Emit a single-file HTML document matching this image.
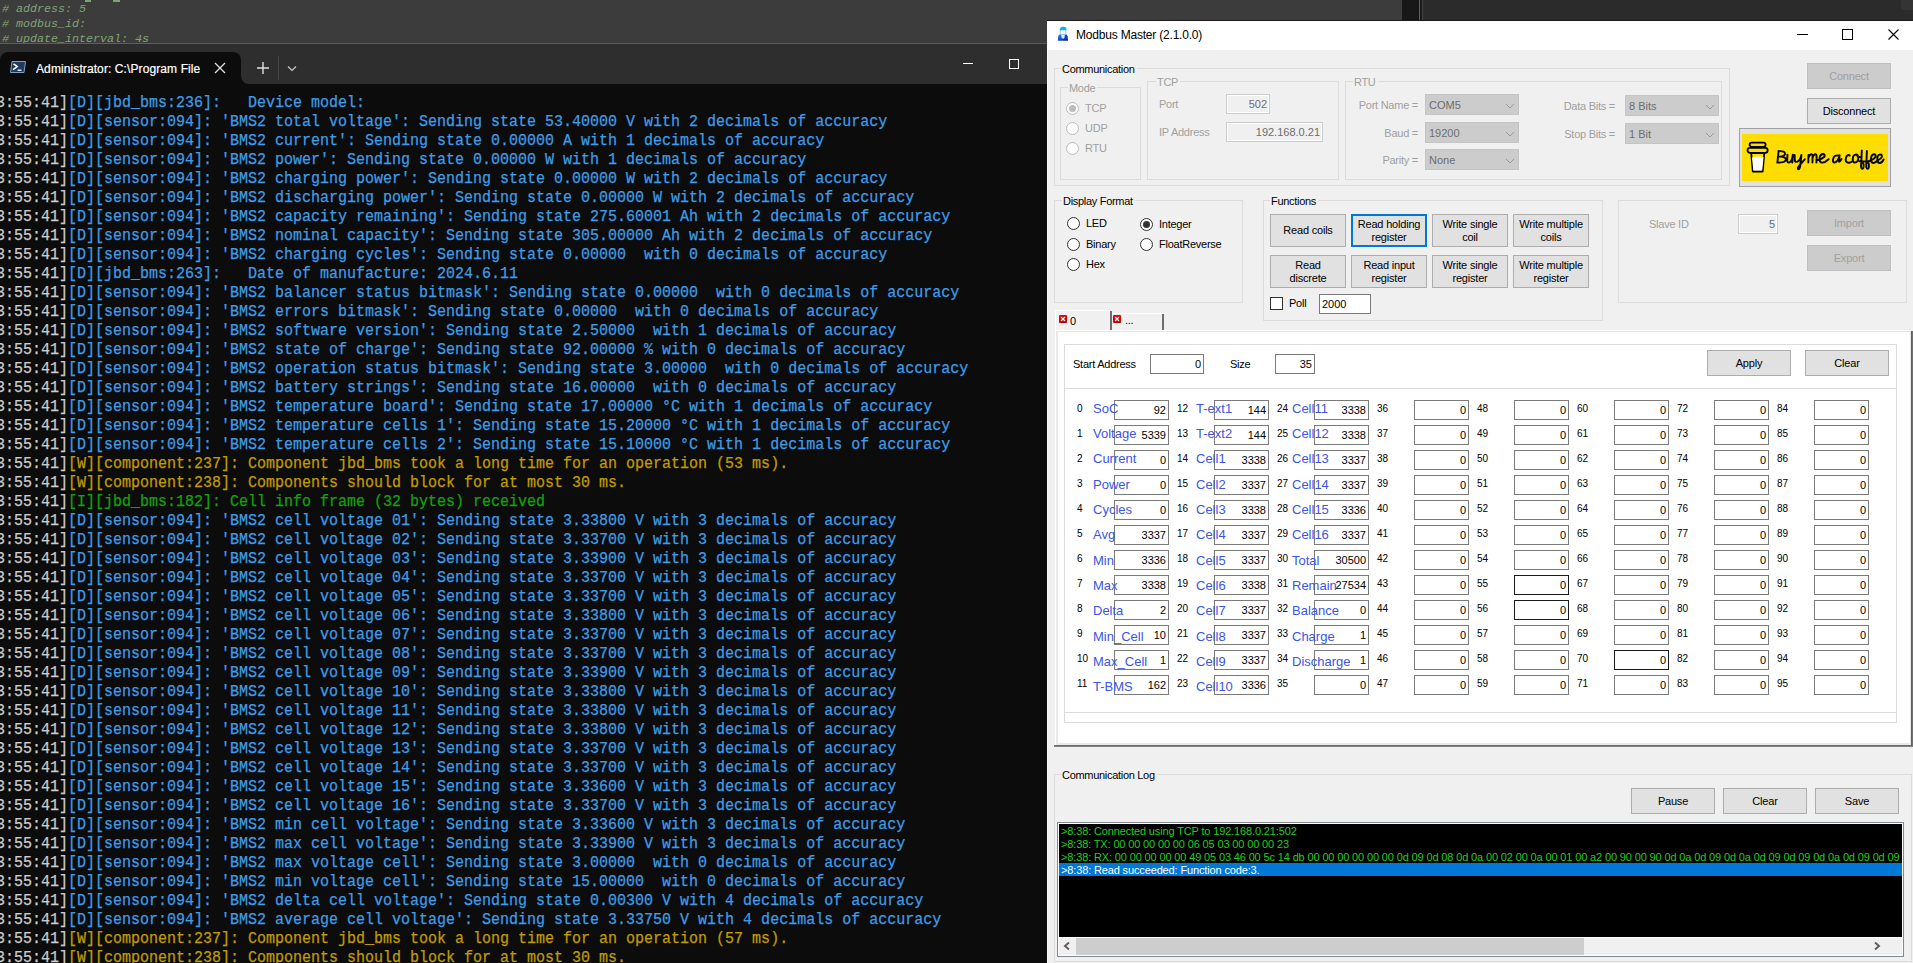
<!DOCTYPE html><html><head><meta charset="utf-8"><style>
*{margin:0;padding:0;box-sizing:border-box}
html,body{width:1913px;height:963px;overflow:hidden;background:#0c0c0c}
body{position:relative;font-family:"Liberation Sans",sans-serif}
div{position:absolute}
svg{display:block}
.t{white-space:pre}
.term{font-family:"Liberation Mono",monospace;font-size:16px;line-height:19px;left:-4px;white-space:pre;color:#cccccc;transform:scaleX(0.9375);transform-origin:0 0;-webkit-text-stroke:0.25px currentColor}
.b{color:#3f9de8}.y{color:#c19c00}.g{color:#13a10e}
.ed{font-family:"Liberation Mono",monospace;font-style:italic;font-size:11.67px;line-height:15px;color:#7fa472;left:2px;white-space:pre}
.w{font-size:11px;line-height:13px;color:#000;white-space:pre}
.dis{color:#a0a0a0}
.grp{border:1px solid #dcdcdc}
.gl{background:#f0f0f0;padding:0 2px 0 1px;font-size:11px;line-height:13px;white-space:pre;letter-spacing:-0.3px}
.btn{background:#e1e1e1;border:1px solid #adadad;font-size:11px;line-height:13px;letter-spacing:-0.2px;text-align:center;display:flex;align-items:center;justify-content:center;white-space:pre}
.dbtn{background:#cccccc;border:1px solid #bfbfbf;color:#a0a0a0;font-size:11px;letter-spacing:-0.2px;text-align:center;display:flex;align-items:center;justify-content:center}
.tb{background:#fff;border:1px solid #7a7a7a;font-size:11px;line-height:13px;text-align:right;padding-right:3px;display:flex;align-items:center;justify-content:flex-end}
.dtb{background:#f0f0f0;border:1px solid #ccc;box-shadow:inset 0 0 0 1px #fff;font-size:11px;color:#6d6d6d;display:flex;align-items:center;justify-content:flex-end;padding-right:2px}
.cb{background:#cccccc;border:1px solid #c4c4c4;font-size:11px;color:#6d6d6d;display:flex;align-items:center;padding-left:3px}
.rad{width:13px;height:13px;border-radius:50%;border:1px solid #333;background:#fff}
.rd{border-color:#bcbcbc}
.ix{font-size:10px;line-height:10px;color:#000;white-space:pre}
.lb{font-size:13px;line-height:15px;color:#3b55e6;white-space:pre}
.rb{background:#fff;border:1px solid #7a7a7a;font-size:11px;line-height:13px;text-align:right;padding-right:2px;display:flex;align-items:center;justify-content:flex-end}
.lg{font-size:11px;line-height:13px;color:#22cc22;white-space:pre;letter-spacing:-0.14px}
</style></head><body>
<div style="left:0px;top:0px;width:1402px;height:43px;background:#3c3c3c;overflow:hidden"></div>
<div style="left:0;top:0;width:1402px;height:43px;overflow:hidden">
<div class="ed" style="top:2px"># address: 5</div>
<div class="ed" style="top:17px"># modbus_id:</div>
<div class="ed" style="top:32px"># update_interval: 4s</div>
<div style="left:85px;top:0px;width:6px;height:2px;background:#7fa472"></div>
<div style="left:113px;top:0px;width:7px;height:2px;background:#7fa472"></div>
</div>
<div style="left:0px;top:43px;width:1402px;height:1px;background:#5c5c5c"></div>
<div style="left:1402px;top:0px;width:17px;height:21px;background:#181818"></div>
<div style="left:1419px;top:0px;width:1px;height:21px;background:#5e5e5e"></div>
<div style="left:1420px;top:0px;width:2px;height:21px;background:#1b1b1b"></div>
<div style="left:1422px;top:0px;width:1px;height:21px;background:#444"></div>
<div style="left:1423px;top:0px;width:490px;height:21px;background:#2b2b2b"></div>
<div style="left:1901px;top:-6px;width:19px;height:16px;background:#343434;border-radius:4px"></div>
<div style="left:1047px;top:20px;width:866px;height:1px;background:#1a1a1a"></div>
<div style="left:0px;top:44px;width:1047px;height:40px;background:#2e2e2e"></div>
<div style="left:0px;top:52px;width:241px;height:32px;background:#0c0c0c;border-radius:8px 8px 0 0"></div>
<div style="left:241px;top:76px;width:8px;height:8px;background:#0c0c0c"></div>
<div style="left:241px;top:76px;width:8px;height:8px;background:#2e2e2e;border-bottom-left-radius:8px"></div>
<div style="left:10px;top:61px;width:16px;height:12px"><svg width="16" height="12" viewBox="0 0 16 12"><path d="M2 0.5 H15.5 L14 11.5 H0.5 Z" fill="#1f3a5f" stroke="#7da0c8" stroke-width="1"/><path d="M3.5 2.8 L7.3 5.6 L3 8.6" fill="none" stroke="#fff" stroke-width="1.5"/><path d="M7.5 9.2 H11.5" stroke="#fff" stroke-width="1.3"/></svg></div>
<div class="t" style="left:36px;top:62px;font-size:12px;line-height:14px;color:#fff;width:164px;overflow:hidden;letter-spacing:0.1px;-webkit-text-stroke:0.2px #fff">Administrator: C:\Program Files</div>
<div style="left:214px;top:62px;width:12px;height:12px"><svg width="12" height="12"><path d="M1 1 L11 11 M11 1 L1 11" stroke="#e8e8e8" stroke-width="1.2"/></svg></div>
<div style="left:256px;top:61px;width:14px;height:14px"><svg width="14" height="14"><path d="M7 1 V13 M1 7 H13" stroke="#e0e0e0" stroke-width="1.4"/></svg></div>
<div style="left:278px;top:56px;width:1px;height:24px;background:#454545"></div>
<div style="left:287px;top:65px;width:10px;height:7px"><svg width="10" height="7"><path d="M1 1.5 L5 5.5 L9 1.5" fill="none" stroke="#d0d0d0" stroke-width="1.1"/></svg></div>
<div style="left:963px;top:63px;width:10px;height:1px;background:#fff"></div>
<div style="left:1009px;top:59px;width:10px;height:10px;border:1px solid #fff"></div>
<div style="left:0;top:84px;width:1047px;height:879px;overflow:hidden">
<div class="term" style="top:9.5px">3:55:41]<span class="b">[D][jbd_bms:236]:   Device model:</span></div>
<div class="term" style="top:28.5px">3:55:41]<span class="b">[D][sensor:094]: &#x27;BMS2 total voltage&#x27;: Sending state 53.40000 V with 2 decimals of accuracy</span></div>
<div class="term" style="top:47.5px">3:55:41]<span class="b">[D][sensor:094]: &#x27;BMS2 current&#x27;: Sending state 0.00000 A with 1 decimals of accuracy</span></div>
<div class="term" style="top:66.5px">3:55:41]<span class="b">[D][sensor:094]: &#x27;BMS2 power&#x27;: Sending state 0.00000 W with 1 decimals of accuracy</span></div>
<div class="term" style="top:85.5px">3:55:41]<span class="b">[D][sensor:094]: &#x27;BMS2 charging power&#x27;: Sending state 0.00000 W with 2 decimals of accuracy</span></div>
<div class="term" style="top:104.5px">3:55:41]<span class="b">[D][sensor:094]: &#x27;BMS2 discharging power&#x27;: Sending state 0.00000 W with 2 decimals of accuracy</span></div>
<div class="term" style="top:123.5px">3:55:41]<span class="b">[D][sensor:094]: &#x27;BMS2 capacity remaining&#x27;: Sending state 275.60001 Ah with 2 decimals of accuracy</span></div>
<div class="term" style="top:142.5px">3:55:41]<span class="b">[D][sensor:094]: &#x27;BMS2 nominal capacity&#x27;: Sending state 305.00000 Ah with 2 decimals of accuracy</span></div>
<div class="term" style="top:161.5px">3:55:41]<span class="b">[D][sensor:094]: &#x27;BMS2 charging cycles&#x27;: Sending state 0.00000  with 0 decimals of accuracy</span></div>
<div class="term" style="top:180.5px">3:55:41]<span class="b">[D][jbd_bms:263]:   Date of manufacture: 2024.6.11</span></div>
<div class="term" style="top:199.5px">3:55:41]<span class="b">[D][sensor:094]: &#x27;BMS2 balancer status bitmask&#x27;: Sending state 0.00000  with 0 decimals of accuracy</span></div>
<div class="term" style="top:218.5px">3:55:41]<span class="b">[D][sensor:094]: &#x27;BMS2 errors bitmask&#x27;: Sending state 0.00000  with 0 decimals of accuracy</span></div>
<div class="term" style="top:237.5px">3:55:41]<span class="b">[D][sensor:094]: &#x27;BMS2 software version&#x27;: Sending state 2.50000  with 1 decimals of accuracy</span></div>
<div class="term" style="top:256.5px">3:55:41]<span class="b">[D][sensor:094]: &#x27;BMS2 state of charge&#x27;: Sending state 92.00000 % with 0 decimals of accuracy</span></div>
<div class="term" style="top:275.5px">3:55:41]<span class="b">[D][sensor:094]: &#x27;BMS2 operation status bitmask&#x27;: Sending state 3.00000  with 0 decimals of accuracy</span></div>
<div class="term" style="top:294.5px">3:55:41]<span class="b">[D][sensor:094]: &#x27;BMS2 battery strings&#x27;: Sending state 16.00000  with 0 decimals of accuracy</span></div>
<div class="term" style="top:313.5px">3:55:41]<span class="b">[D][sensor:094]: &#x27;BMS2 temperature board&#x27;: Sending state 17.00000 °C with 1 decimals of accuracy</span></div>
<div class="term" style="top:332.5px">3:55:41]<span class="b">[D][sensor:094]: &#x27;BMS2 temperature cells 1&#x27;: Sending state 15.20000 °C with 1 decimals of accuracy</span></div>
<div class="term" style="top:351.5px">3:55:41]<span class="b">[D][sensor:094]: &#x27;BMS2 temperature cells 2&#x27;: Sending state 15.10000 °C with 1 decimals of accuracy</span></div>
<div class="term" style="top:370.5px">3:55:41]<span class="y">[W][component:237]: Component jbd_bms took a long time for an operation (53 ms).</span></div>
<div class="term" style="top:389.5px">3:55:41]<span class="y">[W][component:238]: Components should block for at most 30 ms.</span></div>
<div class="term" style="top:408.5px">3:55:41]<span class="g">[I][jbd_bms:182]: Cell info frame (32 bytes) received</span></div>
<div class="term" style="top:427.5px">3:55:41]<span class="b">[D][sensor:094]: &#x27;BMS2 cell voltage 01&#x27;: Sending state 3.33800 V with 3 decimals of accuracy</span></div>
<div class="term" style="top:446.5px">3:55:41]<span class="b">[D][sensor:094]: &#x27;BMS2 cell voltage 02&#x27;: Sending state 3.33700 V with 3 decimals of accuracy</span></div>
<div class="term" style="top:465.5px">3:55:41]<span class="b">[D][sensor:094]: &#x27;BMS2 cell voltage 03&#x27;: Sending state 3.33900 V with 3 decimals of accuracy</span></div>
<div class="term" style="top:484.5px">3:55:41]<span class="b">[D][sensor:094]: &#x27;BMS2 cell voltage 04&#x27;: Sending state 3.33700 V with 3 decimals of accuracy</span></div>
<div class="term" style="top:503.5px">3:55:41]<span class="b">[D][sensor:094]: &#x27;BMS2 cell voltage 05&#x27;: Sending state 3.33700 V with 3 decimals of accuracy</span></div>
<div class="term" style="top:522.5px">3:55:41]<span class="b">[D][sensor:094]: &#x27;BMS2 cell voltage 06&#x27;: Sending state 3.33800 V with 3 decimals of accuracy</span></div>
<div class="term" style="top:541.5px">3:55:41]<span class="b">[D][sensor:094]: &#x27;BMS2 cell voltage 07&#x27;: Sending state 3.33700 V with 3 decimals of accuracy</span></div>
<div class="term" style="top:560.5px">3:55:41]<span class="b">[D][sensor:094]: &#x27;BMS2 cell voltage 08&#x27;: Sending state 3.33700 V with 3 decimals of accuracy</span></div>
<div class="term" style="top:579.5px">3:55:41]<span class="b">[D][sensor:094]: &#x27;BMS2 cell voltage 09&#x27;: Sending state 3.33900 V with 3 decimals of accuracy</span></div>
<div class="term" style="top:598.5px">3:55:41]<span class="b">[D][sensor:094]: &#x27;BMS2 cell voltage 10&#x27;: Sending state 3.33800 V with 3 decimals of accuracy</span></div>
<div class="term" style="top:617.5px">3:55:41]<span class="b">[D][sensor:094]: &#x27;BMS2 cell voltage 11&#x27;: Sending state 3.33800 V with 3 decimals of accuracy</span></div>
<div class="term" style="top:636.5px">3:55:41]<span class="b">[D][sensor:094]: &#x27;BMS2 cell voltage 12&#x27;: Sending state 3.33800 V with 3 decimals of accuracy</span></div>
<div class="term" style="top:655.5px">3:55:41]<span class="b">[D][sensor:094]: &#x27;BMS2 cell voltage 13&#x27;: Sending state 3.33700 V with 3 decimals of accuracy</span></div>
<div class="term" style="top:674.5px">3:55:41]<span class="b">[D][sensor:094]: &#x27;BMS2 cell voltage 14&#x27;: Sending state 3.33700 V with 3 decimals of accuracy</span></div>
<div class="term" style="top:693.5px">3:55:41]<span class="b">[D][sensor:094]: &#x27;BMS2 cell voltage 15&#x27;: Sending state 3.33600 V with 3 decimals of accuracy</span></div>
<div class="term" style="top:712.5px">3:55:41]<span class="b">[D][sensor:094]: &#x27;BMS2 cell voltage 16&#x27;: Sending state 3.33700 V with 3 decimals of accuracy</span></div>
<div class="term" style="top:731.5px">3:55:41]<span class="b">[D][sensor:094]: &#x27;BMS2 min cell voltage&#x27;: Sending state 3.33600 V with 3 decimals of accuracy</span></div>
<div class="term" style="top:750.5px">3:55:41]<span class="b">[D][sensor:094]: &#x27;BMS2 max cell voltage&#x27;: Sending state 3.33900 V with 3 decimals of accuracy</span></div>
<div class="term" style="top:769.5px">3:55:41]<span class="b">[D][sensor:094]: &#x27;BMS2 max voltage cell&#x27;: Sending state 3.00000  with 0 decimals of accuracy</span></div>
<div class="term" style="top:788.5px">3:55:41]<span class="b">[D][sensor:094]: &#x27;BMS2 min voltage cell&#x27;: Sending state 15.00000  with 0 decimals of accuracy</span></div>
<div class="term" style="top:807.5px">3:55:41]<span class="b">[D][sensor:094]: &#x27;BMS2 delta cell voltage&#x27;: Sending state 0.00300 V with 4 decimals of accuracy</span></div>
<div class="term" style="top:826.5px">3:55:41]<span class="b">[D][sensor:094]: &#x27;BMS2 average cell voltage&#x27;: Sending state 3.33750 V with 4 decimals of accuracy</span></div>
<div class="term" style="top:845.5px">3:55:41]<span class="y">[W][component:237]: Component jbd_bms took a long time for an operation (57 ms).</span></div>
<div class="term" style="top:864.5px">3:55:41]<span class="y">[W][component:238]: Components should block for at most 30 ms.</span></div>
</div>
<div style="left:1047px;top:21px;width:866px;height:29px;background:#fff"></div>
<div style="left:1047px;top:50px;width:866px;height:913px;background:#f0f0f0"></div>
<div style="left:1047px;top:50px;width:1px;height:913px;background:#fafafa"></div>
<div style="left:1052px;top:24px;width:20px;height:20px"><svg width="20" height="20" viewBox="0 0 20 20"><defs><linearGradient id="bg1" x1="0" y1="0" x2="1" y2="1"><stop offset="0" stop-color="#2a90ea"/><stop offset="1" stop-color="#0010a0"/></linearGradient></defs><path d="M6.2 12 L7.6 10.2 H14.3 L15.6 12 L16 16.8 H5.8 Z" fill="url(#bg1)"/><path d="M9.1 11 H12.9 L12.2 14.6 H9.8 Z" fill="#dce9f8"/><rect x="8.2" y="5.6" width="5.6" height="4.8" fill="#fff" stroke="#86c4f0" stroke-width="0.9"/><path d="M7.7 6.2 Q7.8 3.2 11 2.8 Q14.2 2.4 14.4 4.6 V6.2 Z" fill="#0ab0f0"/></svg></div>
<div class="t" style="left:1076px;top:28px;font-size:12px;line-height:14px;color:#000;letter-spacing:-0.2px">Modbus Master (2.1.0.0)</div>
<div style="left:1797px;top:34px;width:11px;height:1px;background:#000"></div>
<div style="left:1842px;top:29px;width:11px;height:11px;border:1px solid #000"></div>
<div style="left:1887px;top:28px;width:13px;height:13px"><svg width="13" height="13"><path d="M1.5 1.5 L11.5 11.5 M11.5 1.5 L1.5 11.5" stroke="#000" stroke-width="1.1"/></svg></div>
<div style="left:1054px;top:68px;width:676px;height:118px;border:1px solid #dcdcdc"></div>
<div class="gl" style="left:1061px;top:62.5px;color:#000">Communication</div>
<div style="left:1060px;top:87px;width:81px;height:93px;border:1px solid #dcdcdc"></div>
<div class="gl" style="left:1068px;top:81.5px;color:#a0a0a0">Mode</div>
<div style="left:1066.0px;top:102.0px;width:13px;height:13px;border-radius:50%;border:1px solid #bcbcbc;background:#fff"></div>
<div style="left:1069.0px;top:105.0px;width:7px;height:7px;border-radius:50%;background:#bcbcbc"></div>
<div class="t" style="left:1085px;top:101.3px;font-size:11px;line-height:14px;color:#a0a0a0;letter-spacing:-0.25px">TCP</div>
<div style="left:1066.0px;top:122.0px;width:13px;height:13px;border-radius:50%;border:1px solid #bcbcbc;background:#fff"></div>
<div class="t" style="left:1085px;top:121.3px;font-size:11px;line-height:14px;color:#a0a0a0;letter-spacing:-0.25px">UDP</div>
<div style="left:1066.0px;top:142.0px;width:13px;height:13px;border-radius:50%;border:1px solid #bcbcbc;background:#fff"></div>
<div class="t" style="left:1085px;top:141.3px;font-size:11px;line-height:14px;color:#a0a0a0;letter-spacing:-0.25px">RTU</div>
<div style="left:1147px;top:81px;width:192px;height:99px;border:1px solid #dcdcdc"></div>
<div class="gl" style="left:1156px;top:75.5px;color:#a0a0a0">TCP</div>
<div class="t" style="left:1159px;top:96.8px;font-size:11px;line-height:14px;color:#a0a0a0;letter-spacing:-0.25px">Port</div>
<div class="dtb" style="left:1226px;top:94px;width:44px;height:20px">502</div>
<div class="t" style="left:1159px;top:124.8px;font-size:11px;line-height:14px;color:#a0a0a0;letter-spacing:-0.25px">IP Address</div>
<div class="dtb" style="left:1226px;top:122px;width:97px;height:20px">192.168.0.21</div>
<div style="left:1345px;top:81px;width:377px;height:99px;border:1px solid #dcdcdc"></div>
<div class="gl" style="left:1353px;top:75.5px;color:#a0a0a0">RTU</div>
<div class="t" style="left:1218px;width:200px;text-align:right;top:98.3px;font-size:11px;line-height:14px;color:#a0a0a0;letter-spacing:-0.25px">Port Name =</div>
<div class="cb" style="left:1425px;top:94px;width:94px;height:21px">COM5</div>
<div style="left:1505px;top:102.5px;width:10px;height:6px"><svg width="10" height="6"><path d="M1 1 L5 5 L9 1" fill="none" stroke="#9a9a9a" stroke-width="1"/></svg></div>
<div class="t" style="left:1218px;width:200px;text-align:right;top:125.8px;font-size:11px;line-height:14px;color:#a0a0a0;letter-spacing:-0.25px">Baud =</div>
<div class="cb" style="left:1425px;top:122px;width:94px;height:21px">19200</div>
<div style="left:1505px;top:130.5px;width:10px;height:6px"><svg width="10" height="6"><path d="M1 1 L5 5 L9 1" fill="none" stroke="#9a9a9a" stroke-width="1"/></svg></div>
<div class="t" style="left:1218px;width:200px;text-align:right;top:153.3px;font-size:11px;line-height:14px;color:#a0a0a0;letter-spacing:-0.25px">Parity =</div>
<div class="cb" style="left:1425px;top:149px;width:94px;height:21px">None</div>
<div style="left:1505px;top:157.5px;width:10px;height:6px"><svg width="10" height="6"><path d="M1 1 L5 5 L9 1" fill="none" stroke="#9a9a9a" stroke-width="1"/></svg></div>
<div class="t" style="left:1415px;width:200px;text-align:right;top:99.1px;font-size:11px;line-height:14px;color:#a0a0a0;letter-spacing:-0.25px">Data Bits =</div>
<div class="cb" style="left:1625px;top:95px;width:94px;height:21px">8 Bits</div>
<div style="left:1705px;top:103.5px;width:10px;height:6px"><svg width="10" height="6"><path d="M1 1 L5 5 L9 1" fill="none" stroke="#9a9a9a" stroke-width="1"/></svg></div>
<div class="t" style="left:1415px;width:200px;text-align:right;top:127.10000000000001px;font-size:11px;line-height:14px;color:#a0a0a0;letter-spacing:-0.25px">Stop Bits =</div>
<div class="cb" style="left:1625px;top:123px;width:94px;height:21px">1 Bit</div>
<div style="left:1705px;top:131.5px;width:10px;height:6px"><svg width="10" height="6"><path d="M1 1 L5 5 L9 1" fill="none" stroke="#9a9a9a" stroke-width="1"/></svg></div>
<div class="dbtn" style="left:1807px;top:63px;width:84px;height:26px">Connect</div>
<div class="btn" style="left:1807px;top:98px;width:84px;height:26px;">Disconnect</div>
<div style="left:1739px;top:128px;width:152px;height:59px;border:1px solid #a0a0a0;background:#e1e1e1"></div>
<div style="left:1742px;top:134px;width:146px;height:47px;background:#ffdd00"></div>
<div style="left:1745px;top:140px;width:25px;height:34px"><svg width="25" height="34" viewBox="0 0 25 34"><path d="M6.2 12.8 L7.8 31.5 H17.7 L19.3 12.8 Z" fill="#ffdd00" stroke="#000" stroke-width="1.8" stroke-linejoin="round"/><path d="M7 17.5 Q12 16 18.6 17 L17.2 30.6 H8.3 Z" fill="#fff"/><rect x="2.6" y="7.8" width="20" height="5" rx="2.3" fill="#ffdd00" stroke="#000" stroke-width="1.8"/><rect x="4.6" y="2.6" width="16" height="4.2" rx="2" fill="#ffdd00" stroke="#000" stroke-width="1.8"/></svg></div>
<div style="left:1770px;top:145px;width:120px;height:30px"><svg width="120" height="30" viewBox="1770 145 120 30"><path d="M1778.6 151 L1777.4 162.6 M1778.4 151.2 Q1785.5 150.6 1785 154 Q1784.5 156.3 1779.8 156.6 Q1786.5 156.8 1785.8 160 Q1785 162.8 1777.4 162.6 M1787.4 154.8 L1787.2 160.5 Q1787.3 163 1789.5 162.3 Q1792.2 161.2 1792.8 154.8 L1792.3 162.5 M1794.6 155 L1794.8 160.5 Q1795.2 162.5 1797.5 161.6 Q1800.5 160 1801.4 155 L1800.5 164 Q1799.8 169.8 1798.2 169.3 Q1797 168.3 1800 164.5 Q1802.5 162 1804.7 159.3 M1808.5 155 L1808.3 162.5 M1808.5 157.5 Q1810 154 1811.5 154.3 Q1812.8 154.6 1812.6 157 L1812.4 162.5 M1812.6 157.5 Q1814 154 1815.5 154.3 Q1816.8 154.6 1816.6 157 L1816.4 162.5 M1816.6 160.5 Q1822 159 1824.2 157 Q1825.5 154.5 1823.5 154 Q1820 154 1819.5 158.5 Q1819.3 162.8 1822.5 162.6 Q1825.5 162.3 1828.6 159.3 M1838.8 155.6 Q1834 154.5 1833 159.5 Q1832.6 162.8 1835 162.4 Q1837.5 161.8 1839 157.5 M1839.6 155.2 L1839 161 Q1839 163 1841.5 159 M1849.7 155.6 Q1848.5 154.2 1846.8 156 Q1845.2 158.5 1846 161.3 Q1847.2 163.2 1850 162.5 Q1851.5 162.2 1852.5 161 M1855.8 154.6 Q1852.6 155 1852.8 159.5 Q1853 162.8 1855 162.5 Q1858.5 162 1858.3 157.5 Q1858 154.5 1855.8 154.6 M1857.5 156 Q1859.5 157.5 1861.5 157 M1861.8 150.6 L1861.2 163 Q1860.5 169 1862.5 168.8 Q1864 168.5 1863.5 164 Q1863 162 1861 161.5 M1866.9 151 L1866.4 163 Q1865.8 169 1867.8 168.8 Q1869.3 168.5 1868.8 164 Q1868.2 162 1866 161.5 M1859.5 161.3 Q1864 161.6 1869.5 161.2 M1869 161 Q1874 159.5 1875.5 157 Q1876 154.3 1874 154.2 Q1871 154.5 1871 159 Q1871 163 1873.5 163 Q1875.5 162.8 1877.5 160.5 M1877.5 160.5 Q1881 159 1881.8 157 Q1882.2 154.5 1880.2 154.4 Q1877.5 154.6 1877.3 159 Q1877.3 163 1879.8 163 Q1882 162.8 1883.6 159.5" fill="none" stroke="#05081e" stroke-width="1.95" stroke-linecap="round" stroke-linejoin="round"/></svg></div>
<div style="left:1054px;top:200px;width:189px;height:103px;border:1px solid #dcdcdc"></div>
<div class="gl" style="left:1062px;top:194.5px;color:#000">Display Format</div>
<div style="left:1067.0px;top:217.0px;width:13px;height:13px;border-radius:50%;border:1px solid #333;background:#fff"></div>
<div class="t" style="left:1086px;top:216.3px;font-size:11px;line-height:14px;color:#000;letter-spacing:-0.25px">LED</div>
<div style="left:1067.0px;top:238.0px;width:13px;height:13px;border-radius:50%;border:1px solid #333;background:#fff"></div>
<div class="t" style="left:1086px;top:237.3px;font-size:11px;line-height:14px;color:#000;letter-spacing:-0.25px">Binary</div>
<div style="left:1067.0px;top:258.0px;width:13px;height:13px;border-radius:50%;border:1px solid #333;background:#fff"></div>
<div class="t" style="left:1086px;top:257.3px;font-size:11px;line-height:14px;color:#000;letter-spacing:-0.25px">Hex</div>
<div style="left:1140.0px;top:218.0px;width:13px;height:13px;border-radius:50%;border:1px solid #333;background:#fff"></div>
<div style="left:1143.0px;top:221.0px;width:7px;height:7px;border-radius:50%;background:#333"></div>
<div class="t" style="left:1159px;top:217.3px;font-size:11px;line-height:14px;color:#000;letter-spacing:-0.25px">Integer</div>
<div style="left:1140.0px;top:238.0px;width:13px;height:13px;border-radius:50%;border:1px solid #333;background:#fff"></div>
<div class="t" style="left:1159px;top:237.3px;font-size:11px;line-height:14px;color:#000;letter-spacing:-0.25px">FloatReverse</div>
<div style="left:1263px;top:200px;width:340px;height:121px;border:1px solid #dcdcdc"></div>
<div class="gl" style="left:1270px;top:194.5px;color:#000">Functions</div>
<div class="btn" style="left:1270px;top:214px;width:76px;height:33px;">Read coils</div>
<div class="btn" style="left:1351px;top:214px;width:76px;height:33px;border:2px solid #0078d7;">Read holding<br>register</div>
<div class="btn" style="left:1432px;top:214px;width:76px;height:33px;">Write single<br>coil</div>
<div class="btn" style="left:1513px;top:214px;width:76px;height:33px;">Write multiple<br>coils</div>
<div class="btn" style="left:1270px;top:255px;width:76px;height:33px;">Read<br>discrete</div>
<div class="btn" style="left:1351px;top:255px;width:76px;height:33px;">Read input<br>register</div>
<div class="btn" style="left:1432px;top:255px;width:76px;height:33px;">Write single<br>register</div>
<div class="btn" style="left:1513px;top:255px;width:76px;height:33px;">Write multiple<br>register</div>
<div style="left:1270px;top:297px;width:13px;height:13px;border:1px solid #333;background:#fff"></div>
<div class="t" style="left:1289px;top:296.3px;font-size:11px;line-height:14px;color:#000;letter-spacing:-0.25px">Poll</div>
<div class="tb" style="left:1319px;top:294px;width:52px;height:20px;justify-content:flex-start;padding-left:2px">2000</div>
<div style="left:1618px;top:200px;width:289px;height:103px;border:1px solid #dcdcdc"></div>
<div class="gl" style="left:1619px;top:194.5px;color:#000"></div>
<div class="t" style="left:1649px;top:216.8px;font-size:11px;line-height:14px;color:#a0a0a0;letter-spacing:-0.25px">Slave ID</div>
<div class="dtb" style="left:1738px;top:214px;width:40px;height:20px">5</div>
<div class="dbtn" style="left:1807px;top:210px;width:84px;height:26px">Import</div>
<div class="dbtn" style="left:1807px;top:245px;width:84px;height:26px">Export</div>
<div style="left:1055px;top:310px;width:56px;height:22px;background:#f0f0f0;border-top:1px solid #fff;border-left:1px solid #fff;border-radius:2px 0 0 0"></div>
<div style="left:1110px;top:311px;width:2px;height:20px;background:#6d6d6d"></div>
<div style="left:1112px;top:313px;width:51px;height:19px;background:#f0f0f0;border-top:1px solid #fff"></div>
<div style="left:1162px;top:314px;width:2px;height:17px;background:#6d6d6d"></div>
<div style="left:1059px;top:315px;width:8px;height:8px;background:linear-gradient(#f00000,#b00000);border-radius:1px"><svg width="8" height="8" style="position:absolute;left:0;top:0"><path d="M2 2 L6 6 M6 2 L2 6" stroke="#fff" stroke-width="1.2"/></svg></div>
<div style="left:1113px;top:315px;width:8px;height:8px;background:linear-gradient(#f00000,#b00000);border-radius:1px"><svg width="8" height="8" style="position:absolute;left:0;top:0"><path d="M2 2 L6 6 M6 2 L2 6" stroke="#fff" stroke-width="1.2"/></svg></div>
<div class="t" style="left:1070px;top:313.8px;font-size:11px;line-height:14px;color:#000;letter-spacing:-0.25px">0</div>
<div class="t" style="left:1125px;top:313.3px;font-size:11px;line-height:14px;color:#000;letter-spacing:-0.25px">...</div>
<div style="left:1055px;top:330px;width:856px;height:416px;background:#fff;border:1px solid #e3e3e3;border-top:1px solid #fff;border-left:1px solid #fff"></div>
<div style="left:1056px;top:331px;width:854px;height:1px;background:#e6e6e6"></div>
<div style="left:1056px;top:331px;width:2px;height:414px;background:#e9e9e9"></div>
<div style="left:1056px;top:743px;width:855px;height:2px;background:#e9e9e9"></div>
<div style="left:1054px;top:745px;width:859px;height:2px;background:linear-gradient(#666,#8a8a8a)"></div>
<div style="left:1911px;top:331px;width:2px;height:415px;background:linear-gradient(90deg,#5a5a5a,#7a7a7a)"></div>
<div style="left:1064px;top:344px;width:833px;height:379px;border:1px solid #dcdcdc"></div>
<div style="left:1064px;top:388px;width:833px;height:1px;background:#dcdcdc"></div>
<div style="left:1064px;top:712px;width:833px;height:1px;background:#dcdcdc"></div>
<div class="t" style="left:1073px;top:356.8px;font-size:11px;line-height:14px;color:#000;letter-spacing:-0.25px">Start Address</div>
<div class="rb" style="left:1150px;top:354px;width:54px;height:20px">0</div>
<div class="t" style="left:1230px;top:356.8px;font-size:11px;line-height:14px;color:#000;letter-spacing:-0.25px">Size</div>
<div class="rb" style="left:1275px;top:354px;width:40px;height:20px">35</div>
<div class="btn" style="left:1707px;top:350px;width:84px;height:26px;">Apply</div>
<div class="btn" style="left:1805px;top:350px;width:84px;height:26px;">Clear</div>
<div class="ix" style="left:1077px;top:403.7px">0</div>
<div class="rb" style="left:1114px;top:400px;width:55px;height:20px;">92</div>
<div class="lb" style="left:1093px;top:400.50px">SoC</div>
<div class="ix" style="left:1077px;top:428.7px">1</div>
<div class="rb" style="left:1114px;top:425px;width:55px;height:20px;">5339</div>
<div class="lb" style="left:1093px;top:425.85px">Voltage</div>
<div class="ix" style="left:1077px;top:453.7px">2</div>
<div class="rb" style="left:1114px;top:450px;width:55px;height:20px;">0</div>
<div class="lb" style="left:1093px;top:451.20px">Current</div>
<div class="ix" style="left:1077px;top:478.7px">3</div>
<div class="rb" style="left:1114px;top:475px;width:55px;height:20px;">0</div>
<div class="lb" style="left:1093px;top:476.55px">Power</div>
<div class="ix" style="left:1077px;top:503.7px">4</div>
<div class="rb" style="left:1114px;top:500px;width:55px;height:20px;">0</div>
<div class="lb" style="left:1093px;top:501.90px">Cycles</div>
<div class="ix" style="left:1077px;top:528.7px">5</div>
<div class="rb" style="left:1114px;top:525px;width:55px;height:20px;">3337</div>
<div class="lb" style="left:1093px;top:527.25px">Avg</div>
<div class="ix" style="left:1077px;top:553.7px">6</div>
<div class="rb" style="left:1114px;top:550px;width:55px;height:20px;">3336</div>
<div class="lb" style="left:1093px;top:552.60px">Min</div>
<div class="ix" style="left:1077px;top:578.7px">7</div>
<div class="rb" style="left:1114px;top:575px;width:55px;height:20px;">3338</div>
<div class="lb" style="left:1093px;top:577.95px">Max</div>
<div class="ix" style="left:1077px;top:603.7px">8</div>
<div class="rb" style="left:1114px;top:600px;width:55px;height:20px;">2</div>
<div class="lb" style="left:1093px;top:603.30px">Delta</div>
<div class="ix" style="left:1077px;top:628.7px">9</div>
<div class="rb" style="left:1114px;top:625px;width:55px;height:20px;">10</div>
<div class="lb" style="left:1093px;top:628.65px">Min_Cell</div>
<div class="ix" style="left:1077px;top:653.7px">10</div>
<div class="rb" style="left:1114px;top:650px;width:55px;height:20px;">1</div>
<div class="lb" style="left:1093px;top:654.00px">Max_Cell</div>
<div class="ix" style="left:1077px;top:678.7px">11</div>
<div class="rb" style="left:1114px;top:675px;width:55px;height:20px;">162</div>
<div class="lb" style="left:1093px;top:679.35px">T-BMS</div>
<div class="ix" style="left:1177px;top:403.7px">12</div>
<div class="rb" style="left:1214px;top:400px;width:55px;height:20px;">144</div>
<div class="lb" style="left:1196px;top:400.50px">T-ext1</div>
<div class="ix" style="left:1177px;top:428.7px">13</div>
<div class="rb" style="left:1214px;top:425px;width:55px;height:20px;">144</div>
<div class="lb" style="left:1196px;top:425.85px">T-ext2</div>
<div class="ix" style="left:1177px;top:453.7px">14</div>
<div class="rb" style="left:1214px;top:450px;width:55px;height:20px;">3338</div>
<div class="lb" style="left:1196px;top:451.20px">Cell1</div>
<div class="ix" style="left:1177px;top:478.7px">15</div>
<div class="rb" style="left:1214px;top:475px;width:55px;height:20px;">3337</div>
<div class="lb" style="left:1196px;top:476.55px">Cell2</div>
<div class="ix" style="left:1177px;top:503.7px">16</div>
<div class="rb" style="left:1214px;top:500px;width:55px;height:20px;">3338</div>
<div class="lb" style="left:1196px;top:501.90px">Cell3</div>
<div class="ix" style="left:1177px;top:528.7px">17</div>
<div class="rb" style="left:1214px;top:525px;width:55px;height:20px;">3337</div>
<div class="lb" style="left:1196px;top:527.25px">Cell4</div>
<div class="ix" style="left:1177px;top:553.7px">18</div>
<div class="rb" style="left:1214px;top:550px;width:55px;height:20px;">3337</div>
<div class="lb" style="left:1196px;top:552.60px">Cell5</div>
<div class="ix" style="left:1177px;top:578.7px">19</div>
<div class="rb" style="left:1214px;top:575px;width:55px;height:20px;">3338</div>
<div class="lb" style="left:1196px;top:577.95px">Cell6</div>
<div class="ix" style="left:1177px;top:603.7px">20</div>
<div class="rb" style="left:1214px;top:600px;width:55px;height:20px;">3337</div>
<div class="lb" style="left:1196px;top:603.30px">Cell7</div>
<div class="ix" style="left:1177px;top:628.7px">21</div>
<div class="rb" style="left:1214px;top:625px;width:55px;height:20px;">3337</div>
<div class="lb" style="left:1196px;top:628.65px">Cell8</div>
<div class="ix" style="left:1177px;top:653.7px">22</div>
<div class="rb" style="left:1214px;top:650px;width:55px;height:20px;">3337</div>
<div class="lb" style="left:1196px;top:654.00px">Cell9</div>
<div class="ix" style="left:1177px;top:678.7px">23</div>
<div class="rb" style="left:1214px;top:675px;width:55px;height:20px;">3336</div>
<div class="lb" style="left:1196px;top:679.35px">Cell10</div>
<div class="ix" style="left:1277px;top:403.7px">24</div>
<div class="rb" style="left:1314px;top:400px;width:55px;height:20px;">3338</div>
<div class="lb" style="left:1292px;top:400.50px">Cell11</div>
<div class="ix" style="left:1277px;top:428.7px">25</div>
<div class="rb" style="left:1314px;top:425px;width:55px;height:20px;">3338</div>
<div class="lb" style="left:1292px;top:425.85px">Cell12</div>
<div class="ix" style="left:1277px;top:453.7px">26</div>
<div class="rb" style="left:1314px;top:450px;width:55px;height:20px;">3337</div>
<div class="lb" style="left:1292px;top:451.20px">Cell13</div>
<div class="ix" style="left:1277px;top:478.7px">27</div>
<div class="rb" style="left:1314px;top:475px;width:55px;height:20px;">3337</div>
<div class="lb" style="left:1292px;top:476.55px">Cell14</div>
<div class="ix" style="left:1277px;top:503.7px">28</div>
<div class="rb" style="left:1314px;top:500px;width:55px;height:20px;">3336</div>
<div class="lb" style="left:1292px;top:501.90px">Cell15</div>
<div class="ix" style="left:1277px;top:528.7px">29</div>
<div class="rb" style="left:1314px;top:525px;width:55px;height:20px;">3337</div>
<div class="lb" style="left:1292px;top:527.25px">Cell16</div>
<div class="ix" style="left:1277px;top:553.7px">30</div>
<div class="rb" style="left:1314px;top:550px;width:55px;height:20px;">30500</div>
<div class="lb" style="left:1292px;top:552.60px">Total</div>
<div class="ix" style="left:1277px;top:578.7px">31</div>
<div class="rb" style="left:1314px;top:575px;width:55px;height:20px;">27534</div>
<div class="lb" style="left:1292px;top:577.95px">Remain</div>
<div class="ix" style="left:1277px;top:603.7px">32</div>
<div class="rb" style="left:1314px;top:600px;width:55px;height:20px;">0</div>
<div class="lb" style="left:1292px;top:603.30px">Balance</div>
<div class="ix" style="left:1277px;top:628.7px">33</div>
<div class="rb" style="left:1314px;top:625px;width:55px;height:20px;">1</div>
<div class="lb" style="left:1292px;top:628.65px">Charge</div>
<div class="ix" style="left:1277px;top:653.7px">34</div>
<div class="rb" style="left:1314px;top:650px;width:55px;height:20px;">1</div>
<div class="lb" style="left:1292px;top:654.00px">Discharge</div>
<div class="ix" style="left:1277px;top:678.7px">35</div>
<div class="rb" style="left:1314px;top:675px;width:55px;height:20px;">0</div>
<div class="ix" style="left:1377px;top:403.7px">36</div>
<div class="rb" style="left:1414px;top:400px;width:55px;height:20px;">0</div>
<div class="ix" style="left:1377px;top:428.7px">37</div>
<div class="rb" style="left:1414px;top:425px;width:55px;height:20px;">0</div>
<div class="ix" style="left:1377px;top:453.7px">38</div>
<div class="rb" style="left:1414px;top:450px;width:55px;height:20px;">0</div>
<div class="ix" style="left:1377px;top:478.7px">39</div>
<div class="rb" style="left:1414px;top:475px;width:55px;height:20px;">0</div>
<div class="ix" style="left:1377px;top:503.7px">40</div>
<div class="rb" style="left:1414px;top:500px;width:55px;height:20px;">0</div>
<div class="ix" style="left:1377px;top:528.7px">41</div>
<div class="rb" style="left:1414px;top:525px;width:55px;height:20px;">0</div>
<div class="ix" style="left:1377px;top:553.7px">42</div>
<div class="rb" style="left:1414px;top:550px;width:55px;height:20px;">0</div>
<div class="ix" style="left:1377px;top:578.7px">43</div>
<div class="rb" style="left:1414px;top:575px;width:55px;height:20px;">0</div>
<div class="ix" style="left:1377px;top:603.7px">44</div>
<div class="rb" style="left:1414px;top:600px;width:55px;height:20px;">0</div>
<div class="ix" style="left:1377px;top:628.7px">45</div>
<div class="rb" style="left:1414px;top:625px;width:55px;height:20px;">0</div>
<div class="ix" style="left:1377px;top:653.7px">46</div>
<div class="rb" style="left:1414px;top:650px;width:55px;height:20px;">0</div>
<div class="ix" style="left:1377px;top:678.7px">47</div>
<div class="rb" style="left:1414px;top:675px;width:55px;height:20px;">0</div>
<div class="ix" style="left:1477px;top:403.7px">48</div>
<div class="rb" style="left:1514px;top:400px;width:55px;height:20px;">0</div>
<div class="ix" style="left:1477px;top:428.7px">49</div>
<div class="rb" style="left:1514px;top:425px;width:55px;height:20px;">0</div>
<div class="ix" style="left:1477px;top:453.7px">50</div>
<div class="rb" style="left:1514px;top:450px;width:55px;height:20px;">0</div>
<div class="ix" style="left:1477px;top:478.7px">51</div>
<div class="rb" style="left:1514px;top:475px;width:55px;height:20px;">0</div>
<div class="ix" style="left:1477px;top:503.7px">52</div>
<div class="rb" style="left:1514px;top:500px;width:55px;height:20px;">0</div>
<div class="ix" style="left:1477px;top:528.7px">53</div>
<div class="rb" style="left:1514px;top:525px;width:55px;height:20px;">0</div>
<div class="ix" style="left:1477px;top:553.7px">54</div>
<div class="rb" style="left:1514px;top:550px;width:55px;height:20px;">0</div>
<div class="ix" style="left:1477px;top:578.7px">55</div>
<div class="rb" style="left:1514px;top:575px;width:55px;height:20px;border-color:#1a1a1a;">0</div>
<div class="ix" style="left:1477px;top:603.7px">56</div>
<div class="rb" style="left:1514px;top:600px;width:55px;height:20px;border-color:#1a1a1a;">0</div>
<div class="ix" style="left:1477px;top:628.7px">57</div>
<div class="rb" style="left:1514px;top:625px;width:55px;height:20px;">0</div>
<div class="ix" style="left:1477px;top:653.7px">58</div>
<div class="rb" style="left:1514px;top:650px;width:55px;height:20px;">0</div>
<div class="ix" style="left:1477px;top:678.7px">59</div>
<div class="rb" style="left:1514px;top:675px;width:55px;height:20px;">0</div>
<div class="ix" style="left:1577px;top:403.7px">60</div>
<div class="rb" style="left:1614px;top:400px;width:55px;height:20px;">0</div>
<div class="ix" style="left:1577px;top:428.7px">61</div>
<div class="rb" style="left:1614px;top:425px;width:55px;height:20px;">0</div>
<div class="ix" style="left:1577px;top:453.7px">62</div>
<div class="rb" style="left:1614px;top:450px;width:55px;height:20px;">0</div>
<div class="ix" style="left:1577px;top:478.7px">63</div>
<div class="rb" style="left:1614px;top:475px;width:55px;height:20px;">0</div>
<div class="ix" style="left:1577px;top:503.7px">64</div>
<div class="rb" style="left:1614px;top:500px;width:55px;height:20px;">0</div>
<div class="ix" style="left:1577px;top:528.7px">65</div>
<div class="rb" style="left:1614px;top:525px;width:55px;height:20px;">0</div>
<div class="ix" style="left:1577px;top:553.7px">66</div>
<div class="rb" style="left:1614px;top:550px;width:55px;height:20px;">0</div>
<div class="ix" style="left:1577px;top:578.7px">67</div>
<div class="rb" style="left:1614px;top:575px;width:55px;height:20px;">0</div>
<div class="ix" style="left:1577px;top:603.7px">68</div>
<div class="rb" style="left:1614px;top:600px;width:55px;height:20px;">0</div>
<div class="ix" style="left:1577px;top:628.7px">69</div>
<div class="rb" style="left:1614px;top:625px;width:55px;height:20px;">0</div>
<div class="ix" style="left:1577px;top:653.7px">70</div>
<div class="rb" style="left:1614px;top:650px;width:55px;height:20px;border-color:#1a1a1a;">0</div>
<div class="ix" style="left:1577px;top:678.7px">71</div>
<div class="rb" style="left:1614px;top:675px;width:55px;height:20px;">0</div>
<div class="ix" style="left:1677px;top:403.7px">72</div>
<div class="rb" style="left:1714px;top:400px;width:55px;height:20px;">0</div>
<div class="ix" style="left:1677px;top:428.7px">73</div>
<div class="rb" style="left:1714px;top:425px;width:55px;height:20px;">0</div>
<div class="ix" style="left:1677px;top:453.7px">74</div>
<div class="rb" style="left:1714px;top:450px;width:55px;height:20px;">0</div>
<div class="ix" style="left:1677px;top:478.7px">75</div>
<div class="rb" style="left:1714px;top:475px;width:55px;height:20px;">0</div>
<div class="ix" style="left:1677px;top:503.7px">76</div>
<div class="rb" style="left:1714px;top:500px;width:55px;height:20px;">0</div>
<div class="ix" style="left:1677px;top:528.7px">77</div>
<div class="rb" style="left:1714px;top:525px;width:55px;height:20px;">0</div>
<div class="ix" style="left:1677px;top:553.7px">78</div>
<div class="rb" style="left:1714px;top:550px;width:55px;height:20px;">0</div>
<div class="ix" style="left:1677px;top:578.7px">79</div>
<div class="rb" style="left:1714px;top:575px;width:55px;height:20px;">0</div>
<div class="ix" style="left:1677px;top:603.7px">80</div>
<div class="rb" style="left:1714px;top:600px;width:55px;height:20px;">0</div>
<div class="ix" style="left:1677px;top:628.7px">81</div>
<div class="rb" style="left:1714px;top:625px;width:55px;height:20px;">0</div>
<div class="ix" style="left:1677px;top:653.7px">82</div>
<div class="rb" style="left:1714px;top:650px;width:55px;height:20px;">0</div>
<div class="ix" style="left:1677px;top:678.7px">83</div>
<div class="rb" style="left:1714px;top:675px;width:55px;height:20px;">0</div>
<div class="ix" style="left:1777px;top:403.7px">84</div>
<div class="rb" style="left:1814px;top:400px;width:55px;height:20px;">0</div>
<div class="ix" style="left:1777px;top:428.7px">85</div>
<div class="rb" style="left:1814px;top:425px;width:55px;height:20px;">0</div>
<div class="ix" style="left:1777px;top:453.7px">86</div>
<div class="rb" style="left:1814px;top:450px;width:55px;height:20px;">0</div>
<div class="ix" style="left:1777px;top:478.7px">87</div>
<div class="rb" style="left:1814px;top:475px;width:55px;height:20px;">0</div>
<div class="ix" style="left:1777px;top:503.7px">88</div>
<div class="rb" style="left:1814px;top:500px;width:55px;height:20px;">0</div>
<div class="ix" style="left:1777px;top:528.7px">89</div>
<div class="rb" style="left:1814px;top:525px;width:55px;height:20px;">0</div>
<div class="ix" style="left:1777px;top:553.7px">90</div>
<div class="rb" style="left:1814px;top:550px;width:55px;height:20px;">0</div>
<div class="ix" style="left:1777px;top:578.7px">91</div>
<div class="rb" style="left:1814px;top:575px;width:55px;height:20px;">0</div>
<div class="ix" style="left:1777px;top:603.7px">92</div>
<div class="rb" style="left:1814px;top:600px;width:55px;height:20px;">0</div>
<div class="ix" style="left:1777px;top:628.7px">93</div>
<div class="rb" style="left:1814px;top:625px;width:55px;height:20px;">0</div>
<div class="ix" style="left:1777px;top:653.7px">94</div>
<div class="rb" style="left:1814px;top:650px;width:55px;height:20px;">0</div>
<div class="ix" style="left:1777px;top:678.7px">95</div>
<div class="rb" style="left:1814px;top:675px;width:55px;height:20px;">0</div>
<div style="left:1054px;top:774px;width:858px;height:188px;border:1px solid #dcdcdc"></div>
<div class="gl" style="left:1061px;top:768.5px;color:#000">Communication Log</div>
<div class="btn" style="left:1631px;top:788px;width:84px;height:26px;">Pause</div>
<div class="btn" style="left:1723px;top:788px;width:84px;height:26px;">Clear</div>
<div class="btn" style="left:1815px;top:788px;width:84px;height:26px;">Save</div>
<div style="left:1057px;top:822px;width:847px;height:135px;border:1px solid #828790;background:#fff"></div>
<div style="left:1059px;top:824px;width:843px;height:113px;background:#000"></div>
<div style="left:1059px;top:863px;width:843px;height:13px;background:#0078d7"></div>
<div style="left:1059px;top:938px;width:843px;height:17px;background:#f0f0f0"></div>
<div style="left:1076px;top:938px;width:508px;height:17px;background:#cdcdcd"></div>
<div style="left:1062px;top:941px;width:10px;height:10px"><svg width="10" height="10"><path d="M7 1.5 L3 5 L7 8.5" fill="none" stroke="#606060" stroke-width="2"/></svg></div>
<div style="left:1872px;top:941px;width:10px;height:10px"><svg width="10" height="10"><path d="M3 1.5 L7 5 L3 8.5" fill="none" stroke="#606060" stroke-width="2"/></svg></div>
<div style="left:1059px;top:824px;width:843px;height:113px;overflow:hidden">
<div class="lg" style="left:2px;top:1px">&gt;8:38: Connected using TCP to 192.168.0.21:502</div>
<div class="lg" style="left:2px;top:14px">&gt;8:38: TX: 00 00 00 00 00 06 05 03 00 00 00 23</div>
<div class="lg" style="left:2px;top:27px">&gt;8:38: RX: 00 00 00 00 00 49 05 03 46 00 5c 14 db 00 00 00 00 00 00 0d 09 0d 08 0d 0a 00 02 00 0a 00 01 00 a2 00 90 00 90 0d 0a 0d 09 0d 0a 0d 09 0d 09 0d 0a 0d 09 0d 09 0d 0a 0d 09 0d 0a 0d 09</div>
<div class="lg" style="left:2px;top:40px;color:#fff">&gt;8:38: Read succeeded: Function code:3.</div>
</div>
</body></html>
